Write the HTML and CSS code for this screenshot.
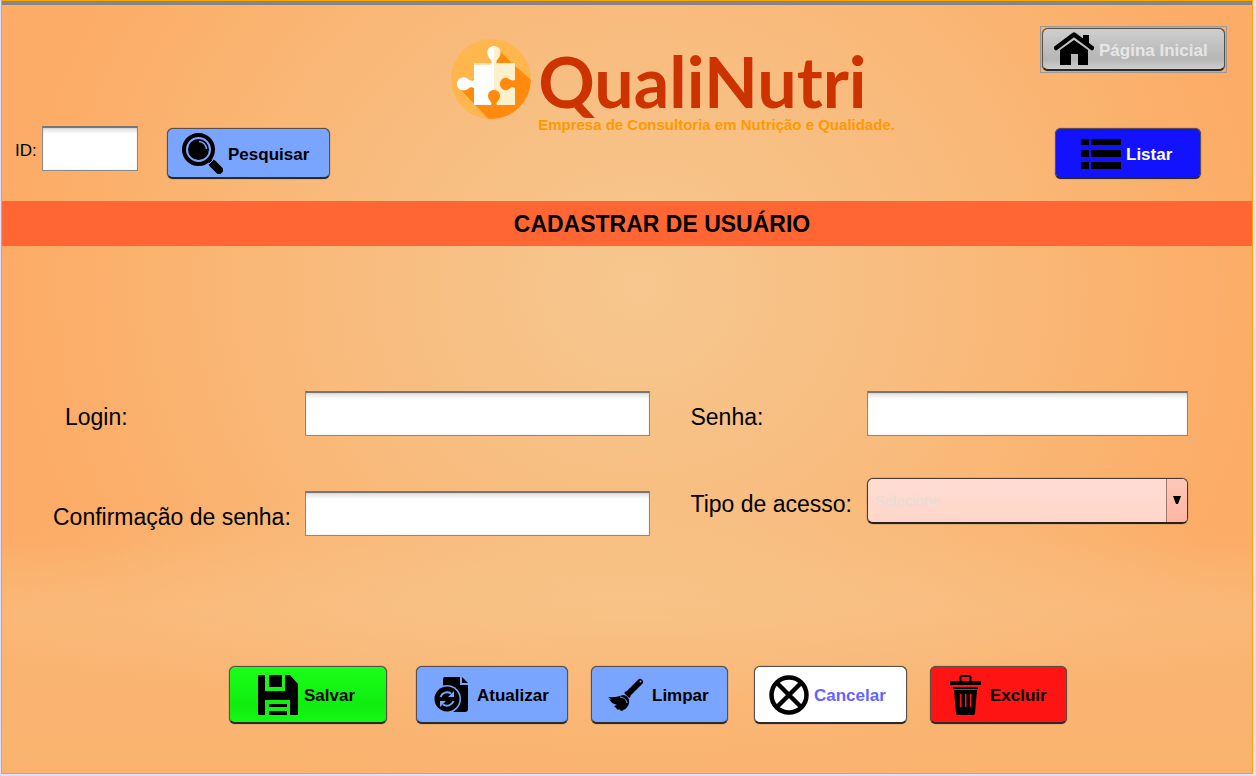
FILE: index.html
```html
<!DOCTYPE html>
<html lang="pt-BR">
<head>
<meta charset="utf-8">
<meta name="viewport" content="width=device-width, initial-scale=1">
<title>QualiNutri - Cadastrar de Usuário</title>
<link rel="stylesheet" href="styles.css">
</head>
<body>
<div class="frame">
  <header class="header">
    <form class="search">
      <label class="search-label" for="user-id">ID:</label>
      <input class="field id-field" id="user-id" type="text">
      <button class="btn btn-search" type="button">
        <svg width="41" height="41" viewBox="0 0 41 41" aria-hidden="true">
          <circle cx="16.500" cy="16.500" r="14.500" fill="none" stroke="#000" stroke-width="4"/>
          <circle cx="16.500" cy="16.500" r="10.500"/>
          <path d="M17 8.500a8 8 0 0 1 7.500 7.500" fill="none" stroke="#7aa5ff" stroke-width="1.500"/>
          <path d="M27 27l3 3" stroke="#000" stroke-width="4"/>
          <path d="M31 31l6 6" stroke="#000" stroke-width="8" stroke-linecap="round"/>
          <path d="M27 31l4-4" stroke="#7aa5ff" stroke-width="1"/>
        </svg>
        <span>Pesquisar</span>
      </button>
    </form>

    <div class="brand">
      <svg class="brand-mark" width="80" height="80" viewBox="0 0 80 80" aria-hidden="true">
        <defs><clipPath id="disc"><circle cx="40" cy="40" r="40"/></clipPath></defs>
        <circle cx="40" cy="40" r="40" fill="#ffb64c"/>
        <g clip-path="url(#disc)">
          <path d="M48 11L64 27L86 46V90H47L10 51L23 40L40 30Z" fill="#ff8a0d"/>
        </g>
        <path d="M43 24H23V41C21 42 19 42 17 40C13 37 6 39 6 45S13 53 17 50C19 48 21 48 23 49V66H40C42 63 37 61 37 57C37 53 40 51 43 51Z" fill="#fff"/>
        <path d="M43 24H64V41C61 42 60 41 58 40C54 37 49 40 49 45S54 53 58 50C60 48 62 48 64 49V66H46C44 63 49 62 49 57C49 53 46 51 43 51Z" fill="#fdf1cb"/>
        <path d="M23 24H41V26H23Z" fill="#ffdfc2"/>
        <path d="M43 7C35 7 35 16 39 20C41 22 41 23 40 26H43Z" fill="#fff"/>
        <path d="M43 7C51 7 51 16 47 20C45 22 45 23 46 26H43Z" fill="#fdf1cb"/>
      </svg>
      <div class="brand-text">
        <span class="brand-name">QualiNutri</span>
        <span class="brand-tag">Empresa de Consultoria em Nutrição e Qualidade.</span>
      </div>
    </div>

    <nav class="nav">
      <div class="home-focus">
        <button class="btn btn-home" type="button">
          <svg width="40" height="34" viewBox="0 0 40 34" aria-hidden="true">
            <path d="M2 16L20 2.500L38 16" fill="none" stroke="#000" stroke-width="4.500" stroke-linecap="round" stroke-linejoin="round"/>
            <path d="M29 3H35V12L29 8Z"/>
            <path d="M6 18L20 8L34 18V33H24V22H17V33H6Z"/>
          </svg>
          <span>Página Inicial</span>
        </button>
      </div>
      <button class="btn btn-list" type="button">
        <svg width="40" height="31" viewBox="0 0 40 31" aria-hidden="true">
          <path d="M0 1H8V7H0ZM10 1H40V7H10ZM0 12H8V19H0ZM10 12H40V19H10ZM0 24H8V31H0ZM10 24H40V31H10Z"/>
        </svg>
        <span>Listar</span>
      </button>
    </nav>
  </header>

  <h1 class="title">CADASTRAR DE USUÁRIO</h1>

  <main>
    <form class="user-form">
      <div class="column column-main">
        <label class="label label-login" for="login">Login:</label>
        <input class="field" id="login" type="text">
        <label class="label" for="confirm">Confirmação de senha:</label>
        <input class="field" id="confirm" type="password">
      </div>
      <div class="column column-side">
        <label class="label" for="password">Senha:</label>
        <input class="field" id="password" type="password">
        <label class="label" for="access">Tipo de acesso:</label>
        <div class="select-box">
          <select class="select" id="access"><option>Selecione</option></select>
          <span class="select-arrow" aria-hidden="true"><svg width="8" height="9" viewBox="0 0 8 9"><path d="M0 0H8L5 8H3Z"/></svg></span>
        </div>
      </div>
    </form>

    <div class="actions">
      <button class="btn btn-save" type="button">
        <svg width="40" height="40" viewBox="0 0 40 40" aria-hidden="true">
          <path fill-rule="evenodd" d="M1 0H7V16H27V0H32L40 9V39Q40 40 39 40H32V25H7V40H1Q0 40 0 39V1Q0 0 1 0Z"/>
          <path d="M11 0H24V12H11ZM11 29H29V32H11ZM11 36H29V40H11Z"/>
        </svg>
        <span>Salvar</span>
      </button>
      <button class="btn btn-update" type="button">
        <svg width="35" height="35" viewBox="0 0 35 35" aria-hidden="true">
          <path d="M11 0H26V8H34V32Q34 35 31 35H19A15 15 0 0 0 9 9V2Q9 0 11 0Z"/>
          <path d="M28 0L34 6H28Z"/>
          <circle cx="13" cy="22" r="14" fill="#7aa5ff"/>
          <circle cx="13" cy="22" r="12.500"/>
          <path d="M6.500 20A7 7 0 0 1 17 16.500M19.500 24A7 7 0 0 1 9 27.500" fill="none" stroke="#7aa5ff" stroke-width="2"/>
          <path d="M20 14V20H14ZM6 30V24H12Z" fill="#7aa5ff"/>
        </svg>
        <span>Atualizar</span>
      </button>
      <button class="btn btn-clear" type="button">
        <svg width="36" height="34" viewBox="0 0 36 34" aria-hidden="true">
          <path d="M25 11L32 4" stroke="#000" stroke-width="6" stroke-linecap="round"/>
          <path d="M20 16L24 12" stroke="#000" stroke-width="6"/>
          <circle cx="32.500" cy="3.500" r="1" fill="#7aa5ff"/>
          <path d="M17 14L22 19" stroke="#000" stroke-width="2.500"/>
          <path d="M15 17C18 17 21 20 21 22C22 27 18 32 13 33L11 31L10 32L6 28L9 27L4 25L1 21L4 22L0 19C7 20 11 18 15 17Z"/>
          <path d="M12 19C15 19 19 22 19 25" fill="none" stroke="#7aa5ff" stroke-width="1"/>
        </svg>
        <span>Limpar</span>
      </button>
      <button class="btn btn-cancel" type="button">
        <svg width="40" height="40" viewBox="0 0 40 40" aria-hidden="true">
          <g fill="none" stroke="#000" stroke-width="4.500"><circle cx="20" cy="20" r="17.500"/><path d="M8 8L32 32M32 8L8 32"/></g>
        </svg>
        <span>Cancelar</span>
      </button>
      <button class="btn btn-delete" type="button">
        <svg width="31" height="40" viewBox="0 0 31 40" aria-hidden="true">
          <path d="M10.500 7V2Q10.500 1 12 1H19Q20.500 1 20.500 2V7" fill="none" stroke="#000" stroke-width="2"/>
          <path d="M0 6H31V10H0ZM3 12H28V14H3Z"/>
          <path fill-rule="evenodd" d="M4 15H27L25 38Q25 40 23 40H8Q6 40 6 38ZM10 19V32H11.500V19ZM15 19V32H16.500V19ZM20 19V32H21.500V19Z"/>
        </svg>
        <span>Excluir</span>
      </button>
    </div>
  </main>
</div>
</body>
</html>
```
FILE: styles.css
```css
* { box-sizing: border-box; }

body {
  margin: 0;
  padding: 0 3px 2px 1px;
  background: #dedeff;
  color: #000;
  font-family: "Liberation Sans", Arial, sans-serif;
}

.frame {
  min-height: calc(100vh - 2px);
  border: 1px solid #ffa500;
  background:
    radial-gradient(ellipse 60% 14% at 50% 77%, rgba(246, 200, 142, 0.6), rgba(246, 200, 142, 0)),
    linear-gradient(to bottom, rgba(249, 188, 126, 0) 70%, rgba(249, 188, 126, 0.6) 79%, rgba(250, 182, 116, 0.6) 100%),
    radial-gradient(ellipse 50% 75% at 51% 37%, #f6c78f 0%, #f8bc7e 45%, #fcac66 100%);
}

.header {
  display: grid;
  grid-template-columns: 452fr 439fr 361fr;
  min-height: 200px;
  border-top: 4px solid #868686;
}

.btn {
  display: flex;
  align-items: center;
  border: 1px solid #5a5048;
  border-bottom: 2px solid #2a2a2a;
  border-radius: 6px;
  box-shadow: 0 0 1px #3a322c;
  color: #000;
  font: bold 17px/20px "Liberation Sans", Arial, sans-serif;
  white-space: nowrap;
  cursor: pointer;
}

.btn svg { flex: none; }

.field {
  width: 100%;
  height: 45px;
  min-width: 0;
  padding: 0 8px;
  border: 1px solid #8a8a8a;
  border-top: 2px solid #777;
  border-radius: 0;
  box-shadow: inset 0 0 1px #9b9b9b;
  background: linear-gradient(#dedede, #fff 6px);
  font: 20px/24px "Liberation Sans", Arial, sans-serif;
}

.search {
  display: flex;
  align-items: flex-start;
  padding: 121px 0 0 13px;
}

.search-label {
  width: 27px;
  padding-top: 15px;
  font-size: 17px;
  line-height: 20px;
}

.search .id-field { width: 96px; }

.btn-search {
  width: 163px;
  height: 51px;
  margin: 2px 0 0 29px;
  padding: 0 0 0 14px;
  gap: 5px;
  background-color: #7aa5ff;
}

.btn-search span, .btn-list span { padding-top: 4px; }

.brand {
  display: flex;
  align-items: flex-start;
  gap: 7px;
  padding: 34px 0 0 2px;
}

.brand-mark { flex: none; }

.brand-text {
  display: flex;
  flex-direction: column;
  padding-top: 7px;
  white-space: nowrap;
}

.brand-name {
  color: #cc3300;
  font: bold 70px/71px Lato, sans-serif;
}

.brand-tag {
  color: #ff9900;
  font-size: 15px;
  font-weight: bold;
  line-height: 16px;
}

.nav {
  display: flex;
  flex-direction: column;
  align-items: flex-end;
  gap: 55px;
  padding: 21px 25px 0 0;
}

.home-focus { padding: 1px; border: 1px solid #999; }

.btn-home {
  width: 183px;
  height: 43px;
  padding: 0 0 0 11px;
  gap: 5px;
  background-image: linear-gradient(#cecece, #b6b6b6 75%, #cecece);
  color: #e6e6e6;
}

.btn-home span { padding-top: 3px; }

.btn-list {
  width: 146px;
  height: 51px;
  margin-right: 26px;
  padding: 0 0 0 25px;
  gap: 5px;
  background-color: #1212ff;
  color: #fff;
}

.title {
  margin: 0;
  padding: 9px 0 8px 70px;
  background: #ff6633;
  font-size: 23px;
  line-height: 28px;
  text-align: center;
}

.user-form {
  display: grid;
  grid-template-columns: 598fr 498fr;
  gap: 40px;
  padding: 145px 64px 0 51px;
}

.column { display: grid; align-items: start; align-content: start; }

.column-main { grid-template-columns: 252px 1fr; row-gap: 55px; }

.column-side { grid-template-columns: 177px 1fr; row-gap: 42px; }

.label {
  padding-top: 12px;
  font-size: 23px;
  line-height: 28px;
  white-space: nowrap;
}

.label-login { padding-left: 12px; }

.select-box { position: relative; }

.select {
  width: 100%;
  height: 46px;
  padding: 0 24px 0 6px;
  border: 1px solid #4a3833;
  border-bottom: 2px solid #222;
  border-radius: 6px;
  box-shadow: 0 0 1px #3a322c;
  appearance: none;
  background: linear-gradient(#ffdcd2, #ffd6c9);
  color: #e2dfdf;
  font: 15px/20px "Liberation Sans", Arial, sans-serif;
}

.select-arrow {
  position: absolute;
  top: 1px;
  right: 1px;
  bottom: 2px;
  display: flex;
  align-items: center;
  justify-content: center;
  width: 21px;
  border-left: 1px solid #a07a70;
  border-radius: 0 5px 4px 0;
  background: linear-gradient(#ffc8b8, #ffb5a2);
  pointer-events: none;
}

.actions {
  display: flex;
  justify-content: center;
  gap: 23px;
  padding: 130px 0 40px 42px;
}

.actions .btn { height: 58px; padding: 0; }
.actions .btn span { padding-top: 3px; }
.actions .btn-save { width: 158px; margin-right: 6px; padding-left: 28px; gap: 6px; background-image: linear-gradient(#19ff19, #10ed10 70%, #14f814); }
.actions .btn-update { width: 152px; padding-left: 17px; gap: 8px; background-color: #7aa5ff; }
.actions .btn-clear { width: 137px; margin-right: 3px; padding-left: 16px; gap: 8px; background-color: #7aa5ff; }
.actions .btn-cancel { width: 153px; padding-left: 14px; gap: 5px; background-color: #fff; color: #6464ff; }
.actions .btn-delete { width: 137px; padding-left: 19px; gap: 9px; background-color: #ff1414; }
```
